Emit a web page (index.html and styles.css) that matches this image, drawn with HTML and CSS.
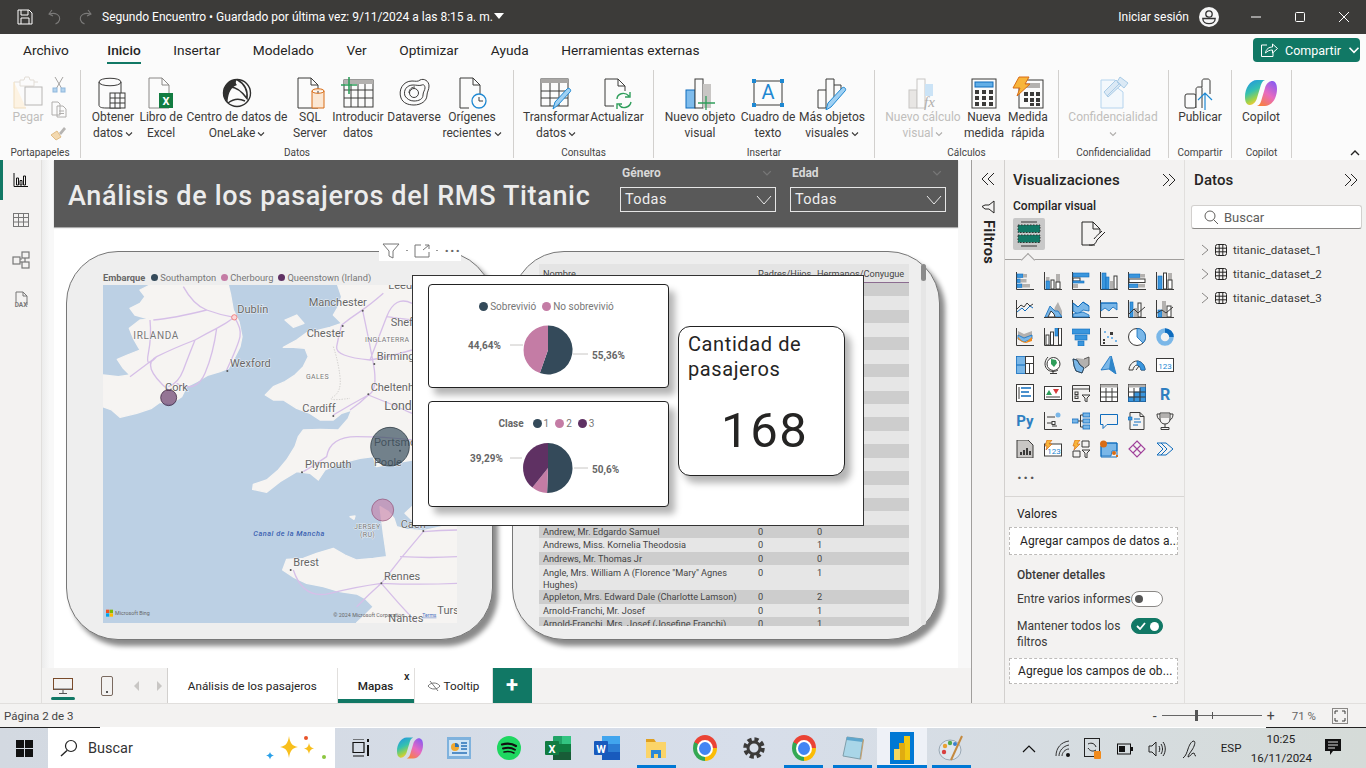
FILE: index.html
```html
<!DOCTYPE html>
<html lang="es">
<head>
<meta charset="utf-8">
<title>Segundo Encuentro</title>
<link rel="stylesheet" href="styles.css">
</head>
<body>
<svg class="defs" width="0" height="0">
  <defs>
    <linearGradient id="cpA" x1="0" y1="0" x2="0.4" y2="1"><stop offset="0" stop-color="#1f8fe8"/><stop offset=".5" stop-color="#35c1b0"/><stop offset=".8" stop-color="#9fd24a"/><stop offset="1" stop-color="#f6c935"/></linearGradient>
    <linearGradient id="cpB" x1="0.8" y1="0" x2="0.2" y2="1"><stop offset="0" stop-color="#8a5cf0"/><stop offset=".5" stop-color="#e86ac0"/><stop offset="1" stop-color="#f8813b"/></linearGradient>
    <symbol id="copilot" viewBox="0 0 32 32">
      <path fill="url(#cpA)" d="M12 3h8c-3 1-4 4-5 8l-3 10c-1 4-4 7-7 7H4c-3-1-4-4-4-8C0 11 5 3 12 3z"/>
      <path fill="url(#cpB)" d="M20 29h-8c3-1 4-4 5-8l3-10c1-4 4-7 7-7h1c3 1 4 4 4 8 0 9-5 17-12 17z"/>
    </symbol>
    <symbol id="tbl" viewBox="0 0 14 14"><rect x="1.5" y="1.5" width="11" height="11" rx="2" fill="none" stroke="#252423"/><path d="M5.2 1.5v11M8.8 1.5v11M1.5 5.2h11M1.5 8.8h11" stroke="#252423" fill="none"/></symbol>
    <symbol id="dbl" viewBox="0 0 14 14"><path d="M7 1L1 7l6 6M13 1L7 7l6 6" fill="none" stroke="#252423"/></symbol>
    <symbol id="dbr" viewBox="0 0 14 14"><path d="M1 1l6 6-6 6M7 1l6 6-6 6" fill="none" stroke="#252423"/></symbol>
    <symbol id="chev" viewBox="0 0 8 8"><path d="M1 2.5L4 5.5 7 2.5" fill="none" stroke="currentColor" stroke-width="1.1"/></symbol>
  </defs>
</svg>

<header class="titlebar">
  <svg class="tb-ic save" width="16" height="16" viewBox="0 0 16 16"><path d="M1 1h11l3 3v11H1z M4 1v5h7V1 M4 15v-6h8v6" fill="none" stroke="#fff"/></svg>
  <svg class="tb-ic undo" width="16" height="16" viewBox="0 0 16 16"><path d="M5 1L2 5l4 2M2.500 5c6-2 11 1 10 6-.5 2-2 3-4 4" fill="none" stroke="#7b7a79" stroke-width="1.100"/></svg>
  <svg class="tb-ic redo" width="16" height="16" viewBox="0 0 16 16"><path d="M11 1l3 4-4 2M13.500 5c-6-2-11 1-10 6 .5 2 2 3 4 4" fill="none" stroke="#7b7a79" stroke-width="1.100"/></svg>
  <span class="doc-title">Segundo Encuentro • Guardado por última vez: 9/11/2024 a las 8:15 a. m.</span>
  <span class="caret"></span>
  <span class="signin">Iniciar sesión</span>
  <svg class="avatar" width="20" height="20" viewBox="0 0 20 20"><circle cx="10" cy="10" r="10" fill="#f5f5f5"/><circle cx="10" cy="7" r="3.200" fill="none" stroke="#333" stroke-width="1.300"/><path d="M3.800 11.500h12.400c0 3.500-3 5.200-6.200 5.200s-6.200-1.700-6.200-5.200z" fill="none" stroke="#333" stroke-width="1.300"/></svg>
  <div class="winbtns">
    <svg width="12" height="12" viewBox="0 0 12 12"><path d="M1 6h10" stroke="#fff"/></svg>
    <svg width="12" height="12" viewBox="0 0 12 12"><rect x="1.500" y="1.500" width="9" height="9" rx="1" fill="none" stroke="#fff"/></svg>
    <svg width="12" height="12" viewBox="0 0 12 12"><path d="M1 1l10 10M11 1L1 11" stroke="#fff"/></svg>
  </div>
</header>

<nav class="tabsrow">
  <span class="rtab first">Archivo</span>
  <span class="rtab active">Inicio</span>
  <span class="rtab">Insertar</span>
  <span class="rtab">Modelado</span>
  <span class="rtab">Ver</span>
  <span class="rtab">Optimizar</span>
  <span class="rtab">Ayuda</span>
  <span class="rtab">Herramientas externas</span>
  <button class="share">
    <svg width="18" height="16" viewBox="0 0 18 16"><path d="M7 3H1.500v11.500H13V10M5.500 11c.5-4 3.500-6 7-6V2l5 4.500-5 4.500V8c-3 0-5 1-7 3z" fill="none" stroke="#fff"/></svg>
    <span>Compartir</span>
    <svg class="share-cv" width="12" height="12" viewBox="0 0 8 8"><use href="#chev"/></svg>
  </button>
</nav>

<section class="ribbon">
  <div class="group g-clip">
    <div class="group-body">
      <div class="item w-pegar off">
        <svg class="ic" width="34" height="34" viewBox="0 0 34 34"><path d="M9 4h4l1-3h4l1 3h4v6H9zM3 6h6M23 6h4" fill="none" stroke="#e2ddd6"/><path d="M3 6v26h12" fill="#fdf3e3" stroke="#f0ddbd"/><rect x="14" y="11" width="17" height="18" fill="#fafafa" stroke="#b8b6b4"/></svg>
        <span class="lbl">Pegar</span>
      </div>
      <div class="mini">
        <svg width="14" height="18" viewBox="0 0 14 18"><path d="M3 1l7 12M11 1L4 13" stroke="#a5a3a1" fill="none"/><rect x="1" y="12" width="4" height="4" fill="#b5d4ee" stroke="#8fb8dd"/><rect x="9" y="12" width="4" height="4" fill="#b5d4ee" stroke="#8fb8dd"/></svg>
        <svg width="16" height="17" viewBox="0 0 16 17"><path d="M1 1h6l2 2v11H1z M6 5h6l3 3v8H6z M8 10h5M8 12.500h5" fill="#fbfbfb" stroke="#b0aeac"/></svg>
        <svg width="17" height="16" viewBox="0 0 17 16"><path d="M9 8l5-6 2 2-5 6z" fill="#b6b4b2"/><path d="M1 10l6-4 4 6-5 3z" fill="#f3d9b0" stroke="#e0bc86"/></svg>
      </div>
    </div>
    <span class="glabel">Portapapeles</span>
  </div>

  <div class="group g-datos">
    <div class="group-body">
      <div class="item w48">
        <svg class="ic" width="34" height="34" viewBox="0 0 34 34"><path d="M3 6c0-5 22-5 22 0v26H10C5 32 3 31 3 29z M3 6c0 5 22 5 22 0" fill="#fbfbfb" stroke="#3b3a39"/><rect x="14" y="17" width="15" height="15" fill="#fbfbfb" stroke="#3b3a39"/><path d="M19 17v15M24 17v15M14 22h15M14 27h15" stroke="#3b3a39"/></svg>
        <span class="lbl">Obtener<br>datos<svg class="cv" width="8" height="8"><use href="#chev"/></svg></span>
      </div>
      <div class="item w48">
        <svg class="ic" width="34" height="34" viewBox="0 0 34 34"><path d="M5 2h13l7 7v23H5z M18 2v7h7" fill="#fbfbfb" stroke="#8a8886"/><rect x="15" y="17" width="14" height="15" fill="#127c41"/><text class="xl" x="22" y="29">X</text></svg>
        <span class="lbl">Libro de<br>Excel</span>
      </div>
      <div class="item w104">
        <svg class="ic" width="34" height="34" viewBox="0 0 34 34"><circle cx="17" cy="17" r="13.500" fill="#fbfbfb" stroke="#30302f" stroke-width="1.400"/><path d="M17 3.500A13.500 13.500 0 0 0 7.500 26.500C8 20 9 12 17 9c-2-2-1-4 0-5.500z" fill="#30302f"/><path d="M17 3.500c7 4 11 10 10 19-6-8-13-13-20-11" fill="none" stroke="#30302f" stroke-width="1.600"/><path d="M8 27c5-4 11-5 17-2" fill="none" stroke="#30302f" stroke-width="1.400"/></svg>
        <span class="lbl">Centro de datos de<br>OneLake<svg class="cv" width="8" height="8"><use href="#chev"/></svg></span>
      </div>
      <div class="item w42">
        <svg class="ic" width="34" height="34" viewBox="0 0 34 34"><path d="M5 2h13l7 7v23H5z M18 2v7h7" fill="#fbfbfb" stroke="#3b3a39"/><path d="M19 15c0-3 12-3 12 0v17H19z M19 15c0 3 12 3 12 0" fill="#fbe7d3" stroke="#d86c16"/></svg>
        <span class="lbl">SQL<br>Server</span>
      </div>
      <div class="item w54">
        <svg class="ic" width="34" height="34" viewBox="0 0 34 34"><rect x="3" y="4" width="29" height="27" fill="#fbfbfb" stroke="#3b3a39"/><rect x="3" y="4" width="29" height="4" fill="#b3b1af"/><path d="M10 8v23M17 8v23M24 8v23M3 14h29M3 22h29" stroke="#3b3a39"/><path d="M8 1v17M0 9h16" stroke="#2f9e5b" stroke-width="1.600"/></svg>
        <span class="lbl">Introducir<br>datos</span>
      </div>
      <div class="item w58">
        <svg class="ic" width="34" height="34" viewBox="0 0 34 34"><g fill="none" stroke="#3b3a39"><path d="M4 22C1 14 6 5 15 5c3 0 6 1 8-1 4-2 9 1 9 6 0 4-2 6-2 9 0 6-6 10-13 10C11 29 6 27 4 22z"/><path d="M8 20c-2-6 2-11 8-11 4 0 6 1 9 0 2-1 3 1 3 3s-2 4-2 7c0 4-4 6-9 6-4 0-7-2-9-5z"/><circle cx="17" cy="17" r="4.500"/><path d="M12 17c0-4 3-6 6-6"/></g></svg>
        <span class="lbl">Dataverse</span>
      </div>
      <div class="item w58">
        <svg class="ic" width="34" height="34" viewBox="0 0 34 34"><path d="M5 2h13l7 7v13 M18 2v7h7 M14 32H5V2" fill="#fbfbfb" stroke="#3b3a39"/><circle cx="24" cy="25" r="7" fill="#fbfbfb" stroke="#1e88d2" stroke-width="1.300"/><path d="M24 21v4h4" fill="none" stroke="#3b3a39"/></svg>
        <span class="lbl">Orígenes<br>recientes<svg class="cv" width="8" height="8"><use href="#chev"/></svg></span>
      </div>
    </div>
    <span class="glabel">Datos</span>
  </div>

  <div class="group g-cons">
    <div class="group-body">
      <div class="item w64">
        <svg class="ic" width="34" height="34" viewBox="0 0 34 34"><rect x="2" y="3" width="27" height="27" fill="#fbfbfb" stroke="#3b3a39"/><rect x="2" y="3" width="27" height="4" fill="#a8a6a4"/><path d="M11 7v23M20 7v23M2 15h27M2 22h27" stroke="#3b3a39"/><path d="M14 33l2-7L28 13c2-2 5 1 3 3L19 29z" fill="#9fd0f3" stroke="#1e88d2"/></svg>
        <span class="lbl">Transformar<br>datos<svg class="cv" width="8" height="8"><use href="#chev"/></svg></span>
      </div>
      <div class="item w58">
        <svg class="ic" width="34" height="34" viewBox="0 0 34 34"><path d="M14 30H5V3h13l7 7v5 M18 3v7h7" fill="#fbfbfb" stroke="#3b3a39"/><g fill="none" stroke="#2f9e5b" stroke-width="1.400"><path d="M17 23c0-5 7-8 12-3M30 16v5h-5"/><path d="M31 26c-1 5-8 8-12 3M17 33v-5h5"/></g></svg>
        <span class="lbl">Actualizar</span>
      </div>
    </div>
    <span class="glabel">Consultas</span>
  </div>

  <div class="group g-ins">
    <div class="group-body">
      <div class="item w72">
        <svg class="ic" width="34" height="34" viewBox="0 0 34 34"><rect x="3" y="14" width="9" height="18" fill="#7fbcec" stroke="#0f6cbd"/><rect x="12" y="3" width="8" height="29" fill="#fbfbfb" stroke="#3b3a39"/><rect x="20" y="8" width="8" height="24" fill="#c8c6c4"/><path d="M23 20v14M15 27h17" stroke="#2f9e5b" stroke-width="1.300"/></svg>
        <span class="lbl">Nuevo objeto<br>visual</span>
      </div>
      <div class="item w64">
        <svg class="ic" width="34" height="34" viewBox="0 0 34 34"><rect x="3" y="3" width="28" height="24" transform="translate(0 2)" fill="#fbfbfb" stroke="#3b3a39"/><g fill="#1e88d2"><rect x="1" y="3" width="4" height="4"/><rect x="29" y="3" width="4" height="4"/><rect x="1" y="27" width="4" height="4"/><rect x="29" y="27" width="4" height="4"/></g><text class="atxt" x="17" y="23">A</text></svg>
        <span class="lbl">Cuadro de<br>texto</span>
      </div>
      <div class="item w64">
        <svg class="ic" width="34" height="34" viewBox="0 0 34 34"><path d="M3 32V14h8V3h8v6h7v5 M3 32h9 M11 14v18" fill="#fbfbfb" stroke="#3b3a39"/><path d="M19 9v15" stroke="#3b3a39"/><path d="M11 34l2-7L27 12c2-2 5 1 3 3L16 31z" fill="#9fd0f3" stroke="#1e88d2"/></svg>
        <span class="lbl">Más objetos<br>visuales<svg class="cv" width="8" height="8"><use href="#chev"/></svg></span>
      </div>
    </div>
    <span class="glabel">Insertar</span>
  </div>

  <div class="group g-calc">
    <div class="group-body">
      <div class="item w76 off">
        <svg class="ic" width="34" height="34" viewBox="0 0 34 34"><rect x="3" y="14" width="8" height="18" fill="#e8e6e4" stroke="#c8c6c4"/><rect x="11" y="3" width="8" height="29" fill="#fbfbfb" stroke="#c8c6c4"/><rect x="19" y="8" width="8" height="12" fill="#cbe3f6"/><text class="fx" x="18" y="31">fx</text></svg>
        <span class="lbl">Nuevo cálculo<br>visual<svg class="cv" width="8" height="8"><use href="#chev"/></svg></span>
      </div>
      <div class="item w46">
        <svg class="ic" width="34" height="34" viewBox="0 0 34 34"><rect x="5" y="3" width="24" height="29" fill="#fbfbfb" stroke="#3b3a39"/><rect x="8" y="6" width="18" height="5" fill="#63aee6" stroke="#0f6cbd"/><g fill="#3b3a39"><rect x="8" y="14" width="4" height="4"/><rect x="15" y="14" width="4" height="4"/><rect x="22" y="14" width="4" height="4"/><rect x="8" y="20" width="4" height="4"/><rect x="15" y="20" width="4" height="4"/><rect x="22" y="20" width="4" height="4"/><rect x="8" y="26" width="4" height="4"/><rect x="15" y="26" width="4" height="4"/><rect x="22" y="26" width="4" height="4"/></g></svg>
        <span class="lbl">Nueva<br>medida</span>
      </div>
      <div class="item w42">
        <svg class="ic" width="34" height="34" viewBox="0 0 34 34"><rect x="8" y="4" width="24" height="28" fill="#fbfbfb" stroke="#3b3a39"/><rect x="14" y="7" width="15" height="5" fill="#b3b1af"/><g fill="#3b3a39"><rect x="13" y="16" width="4" height="4"/><rect x="19" y="16" width="4" height="4"/><rect x="25" y="16" width="4" height="4"/><rect x="13" y="22" width="4" height="4"/><rect x="19" y="22" width="4" height="4"/><rect x="25" y="22" width="4" height="4"/><rect x="19" y="27" width="4" height="3"/><rect x="25" y="27" width="4" height="3"/></g><path d="M8 1h10l-4 7h5L6 20l3-8H2z" fill="#f8b53a" stroke="#d86c16"/></svg>
        <span class="lbl">Medida<br>rápida</span>
      </div>
    </div>
    <span class="glabel">Cálculos</span>
  </div>

  <div class="group g-conf">
    <div class="group-body">
      <div class="item w96 off">
        <svg class="ic" width="34" height="34" viewBox="0 0 34 34"><path d="M5 4h14v6l8 6v16H5z" fill="#f3f8fc" stroke="#b5d4ee"/><path d="M8 16L20 4l5 5-13 12zM11 20L24 7M24 1l8 6-4 5-7-6z" fill="#dbe9f5" stroke="#a9cbe6"/></svg>
        <span class="lbl">Confidencialidad<br><svg class="cv solo" width="8" height="8"><use href="#chev"/></svg></span>
      </div>
    </div>
    <span class="glabel">Confidencialidad</span>
  </div>

  <div class="group g-pub">
    <div class="group-body">
      <div class="item w52">
        <svg class="ic" width="34" height="34" viewBox="0 0 34 34"><g fill="#fbfbfb" stroke="#3b3a39"><rect x="2" y="18" width="11" height="14" rx="2"/><path d="M13 32V13c0-1 1-2 2-2h4v21"/><path d="M19 11V5c0-1 1-2 2-2h4c1 0 2 1 2 2v13"/></g><path d="M22 34V17M15 24l7-7 7 7" fill="none" stroke="#1e88d2" stroke-width="1.200"/></svg>
        <span class="lbl">Publicar</span>
      </div>
    </div>
    <span class="glabel">Compartir</span>
  </div>

  <div class="group g-cop">
    <div class="group-body">
      <div class="item w50">
        <svg class="ic" width="32" height="34" viewBox="0 0 32 32"><use href="#copilot"/></svg>
        <span class="lbl">Copilot</span>
      </div>
    </div>
    <span class="glabel">Copilot</span>
  </div>
  <svg class="collapse" width="10" height="7" viewBox="0 0 10 7"><path d="M1 6l4-4 4 4" fill="none" stroke="#252423" stroke-width="1.400"/></svg>
</section>

<main class="main">
  <aside class="rail">
    <span class="rail-btn on"><svg width="16" height="16" viewBox="0 0 16 16"><path d="M1 1v13.500h14" fill="none" stroke="#111"/><path d="M3.500 6h2v7h-2zM7 8.500h2V13H7zM10.500 4h2v9h-2z" fill="none" stroke="#111"/></svg></span>
    <span class="rail-btn"><svg width="16" height="16" viewBox="0 0 16 16"><rect x=".5" y="1.500" width="15" height="13" fill="none" stroke="#777"/><path d="M.5 5.500h15M.5 10h15M5.500 1.500v13M10.500 1.500v13" stroke="#777"/></svg></span>
    <span class="rail-btn"><svg width="18" height="18" viewBox="0 0 18 18"><g fill="none" stroke="#777" stroke-width="1.200"><rect x="1" y="6" width="7" height="7"/><rect x="10" y="1" width="7" height="6"/><rect x="10" y="11" width="7" height="6"/><path d="M8 8h2M8 11h2M13 7v4"/></g></svg></span>
    <span class="rail-btn"><svg width="18" height="18" viewBox="0 0 18 18"><path d="M4 11V1h7l4 4v9 M11 1v4h4" fill="none" stroke="#777"/><text class="dax" x="9" y="16">DAX</text></svg></span>
  </aside>

  <div class="center">
    <div class="canvas">
      <div class="page">
        <div class="rep-head">
          <h1 class="rep-title">Análisis de los pasajeros del RMS Titanic</h1>
          <div class="slicers">
            <div class="slicer">
              <div class="sl-label"><span>Género</span><svg class="sl-faint" width="10" height="10" viewBox="0 0 8 8"><use href="#chev"/></svg></div>
              <div class="sl-box"><span>Todas</span><svg width="16" height="16" viewBox="0 0 16 16"><path d="M1 4l7 8 7-8" fill="none" stroke="#e8e8e8"/></svg></div>
            </div>
            <div class="slicer">
              <div class="sl-label"><span>Edad</span><svg class="sl-faint" width="10" height="10" viewBox="0 0 8 8"><use href="#chev"/></svg></div>
              <div class="sl-box"><span>Todas</span><svg width="16" height="16" viewBox="0 0 16 16"><path d="M1 4l7 8 7-8" fill="none" stroke="#e8e8e8"/></svg></div>
            </div>
          </div>
        </div>

        <div class="visuals">
          <article class="card map-card">
            <div class="legend map-legend">
              <b>Embarque</b>
              <span class="dot navy"></span><span>Southampton</span>
              <span class="dot pink"></span><span>Cherbourg</span>
              <span class="dot plum"></span><span>Queenstown (Irland)</span>
            </div>
            <svg class="map" width="354" height="338" viewBox="189 135 1062 1014">
              <rect x="189" y="135" width="1062" height="1014" fill="#bcd0e4"/>
              <g class="land">
                <path d="M330 135L565 135 572 165 580 210 597 245 606 290 600 320 585 350 565 385 540 395 505 405 470 425 440 440 425 470 395 490 360 487 335 505 290 520 240 532 215 510 189 500 189 405 235 410 270 405 250 385 232 358 262 345 300 330 280 295 268 265 300 240 330 238 285 225 270 205 300 190 315 170 300 150z"/>
                <path d="M893 135L905 170 895 200 880 225 905 250 870 262 830 272 800 278 770 300 730 322 760 322 795 325 805 350 790 380 765 405 735 425 700 440 676 465 700 480 730 480 770 505 810 520 840 540 880 540 905 520 935 510 925 535 895 570 840 568 790 570 775 590 765 620 740 660 715 690 680 720 640 733 638 748 680 757 720 725 770 695 810 700 835 720 855 690 900 670 960 655 1000 650 1010 680 1060 670 1116 660 1116 135z"/>
                <path d="M735 240L770 225 792 250 760 262z"/>
                <path d="M1116 800L1095 820 1116 840z"/>
                <path d="M930 830L945 828 942 838z"/>
                <path d="M1020 800L1045 815 1062 835 1070 860 1100 868 1150 872 1251 850 1251 1148 950 1148 975 1125 1000 1100 975 1075 950 1062 900 1055 850 1040 800 1030 762 1012 728 990 740 958 790 955 830 940 880 925 915 945 950 960 1000 955 1040 950 1035 915 1030 880z"/>
              </g>
              <g class="roads">
                <path d="M583 232Q540 225 500 210T430 140M583 232Q560 250 530 265T465 300Q445 350 430 390T385 440M583 232Q605 265 600 290T560 390M530 265Q520 340 495 400T410 430M465 300Q400 325 350 350T385 450M340 240Q400 235 500 210M350 350Q310 380 270 410M330 240Q335 290 325 340T350 350"/>
                <path d="M905 255Q930 235 960 215T1030 160M905 255Q895 290 890 320T990 360Q1050 350 1116 330M968 212Q985 290 1000 370T985 465Q960 490 930 510M985 465Q1050 490 1116 520M880 525Q930 495 985 465M1116 600Q1030 590 950 590T860 650Q825 675 790 695M990 360Q1015 295 1040 230T1116 190M1040 230Q1080 235 1116 240"/>
                <path d="M1024 1030Q1085 950 1150 875M1024 1030Q1140 1035 1251 1030M1024 1030Q950 1040 870 1060T760 990M1024 1030Q985 1065 950 1100M1150 875Q1200 870 1251 870M1024 1030Q1075 1090 1130 1148M1080 950Q1170 955 1251 950"/>
              </g>
              <path d="M880 320Q895 365 900 410T880 470 930 475" fill="none" stroke="#a9a6a4" stroke-width="1.500" stroke-dasharray="4 4"/>
              <g class="map-pts">
                <circle cx="562" cy="393" r="3"/><circle cx="880" cy="528" r="3"/><circle cx="985" cy="463" r="3"/><circle cx="1003" cy="372" r="3"/><circle cx="968" cy="212" r="3"/><circle cx="908" cy="258" r="3"/><circle cx="786" cy="697" r="3"/><circle cx="1080" cy="632" r="3"/><circle cx="1150" cy="873" r="3"/><circle cx="1024" cy="1030" r="3"/><circle cx="752" cy="990" r="3"/>
              </g>
              <circle cx="583" cy="232" r="8" fill="#fbd8d8" stroke="#ea5a5a" stroke-width="2"/>
              <g class="mt">
                <text x="592" y="218">Dublín</text>
                <text x="806" y="197">Manchester</text>
                <text x="1045" y="147">Leeds</text>
                <text x="800" y="290">Chester</text>
                <text x="1052" y="259">Sheffield</text>
                <text x="1010" y="360">Birmingham</text>
                <text x="570" y="381">Wexford</text>
                <text x="992" y="452">Cheltenham</text>
                <text x="375" y="452">Cork</text>
                <text x="787" y="516">Cardiff</text>
                <text x="795" y="685">Plymouth</text>
                <text x="1082" y="863">Caen</text>
                <text x="760" y="978">Brest</text>
                <text x="1032" y="1020">Rennes</text>
                <text x="1192" y="1121">Turs</text>
                <text x="1045" y="1146">Nantes</text>
                <text class="mt-big" x="1033" y="509">Londres</text>
                <text x="1002" y="619">Portsmouth</text>
                <text x="1002" y="678">Poole</text>
                <text class="mt-cty" x="280" y="296">IRLANDA</text>
                <text class="mt-sm" x="975" y="305">INGLATERRA</text>
                <text class="mt-sm" x="798" y="416">GALES</text>
                <text class="mt-sm" x="942" y="868">JERSEY</text>
                <text class="mt-sm" x="960" y="890">(RU)</text>
                <text class="mt-sea" x="640" y="887">Canal de la Mancha</text>
                <text class="mt-cr" x="225" y="1126">Microsoft Bing</text>
                <text class="mt-cr" x="880" y="1130">© 2024 Microsoft Corporation</text>
                <text class="mt-term" x="1147" y="1130">Terms</text>
              </g>
              <g>
                <rect x="198" y="1109" width="10" height="10" fill="#f25022"/><rect x="209" y="1109" width="10" height="10" fill="#7fba00"/><rect x="198" y="1120" width="10" height="10" fill="#00a4ef"/><rect x="209" y="1120" width="10" height="10" fill="#ffb900"/>
              </g>
              <circle cx="386" cy="473" r="24" fill="#5f3163" fill-opacity=".65" stroke="#2e1732" stroke-width="2"/>
              <circle cx="1050" cy="620" r="58" fill="#344a5a" fill-opacity=".68" stroke="#1c2a34" stroke-width="2"/>
              <circle cx="1028" cy="810" r="33" fill="#c47ca5" fill-opacity=".6" stroke="#8f4f74" stroke-width="2"/>
            </svg>
            <div class="vis-head">
              <svg width="18" height="16" viewBox="0 0 18 16"><path d="M1 1h16l-6 7v7l-4-2V8z" fill="none" stroke="#777"/></svg>
              <i></i>
              <svg width="16" height="14" viewBox="0 0 16 14"><path d="M7 1H1v12h14V8M9 6l6-5M11 1h4v4" fill="none" stroke="#777"/></svg>
              <i></i>
              <span class="more">···</span>
            </div>
          </article>

          <article class="card table-card">
            <div class="tbl">
              <div class="thead"><span>Nombre</span><span>Padres/Hijos</span><span>Hermanos/Conyugue</span></div>
              <div class="row d"></div><div class="row"></div><div class="row d"></div><div class="row"></div><div class="row d"></div><div class="row"></div><div class="row d"></div><div class="row"></div><div class="row d"></div><div class="row"></div><div class="row d"></div><div class="row"></div><div class="row d"></div><div class="row"></div><div class="row d"></div><div class="row"></div><div class="row d"></div><div class="row"></div>
              <div class="row d"><span>Andrew, Mr. Edgardo Samuel</span><span>0</span><span>0</span></div>
              <div class="row"><span>Andrews, Miss. Kornelia Theodosia</span><span>0</span><span>1</span></div>
              <div class="row d"><span>Andrews, Mr. Thomas Jr</span><span>0</span><span>0</span></div>
              <div class="row tall"><span>Angle, Mrs. William A (Florence "Mary" Agnes Hughes)</span><span>0</span><span>1</span></div>
              <div class="row d"><span>Appleton, Mrs. Edward Dale (Charlotte Lamson)</span><span>0</span><span>2</span></div>
              <div class="row"><span>Arnold-Franchi, Mr. Josef</span><span>0</span><span>1</span></div>
              <div class="row d"><span>Arnold-Franchi, Mrs. Josef (Josefine Franchi)</span><span>0</span><span>1</span></div>
            </div>
            <div class="scroll"></div>
          </article>

          <div class="tooltip">
            <div class="tip-col">
              <div class="tip-card">
                <div class="legend pie-legend"><span class="dot navy big"></span><span>Sobrevivió</span><span class="dot pink big"></span><span>No sobrevivió</span></div>
                <svg class="pie" width="238" height="68" viewBox="0 0 238 68">
                  <path d="M119 33V8.500A24.500 24.500 0 1 1 110.900 56.100z" fill="#344a5a"/>
                  <path d="M119 33L110.900 56.100A24.500 24.500 0 0 1 119 8.500z" fill="#c47ca5"/>
                  <path d="M144 37h15M81 28h13" stroke="#c8c6c4"/>
                  <text class="pct" x="39" y="32">44,64%</text>
                  <text class="pct" x="163" y="42">55,36%</text>
                </svg>
              </div>
              <div class="tip-card second">
                <div class="legend pie-legend"><b class="cl">Clase</b><span class="dot navy big"></span><span>1</span><span class="dot pink big"></span><span>2</span><span class="dot plum big"></span><span>3</span></div>
                <svg class="pie" width="238" height="70" viewBox="0 0 238 70">
                  <path d="M119 34V9A25 25 0 1 1 118.100 59z" fill="#344a5a"/>
                  <path d="M119 34L118.100 59A25 25 0 0 1 103.400 53.500z" fill="#c47ca5"/>
                  <path d="M119 34L103.400 53.500A25 25 0 0 1 119 9z" fill="#5f3163"/>
                  <path d="M145 34h14M81 24h12" stroke="#c8c6c4"/>
                  <text class="pct" x="41" y="28">39,29%</text>
                  <text class="pct" x="163" y="39">50,6%</text>
                </svg>
              </div>
            </div>
            <div class="kpi">
              <div class="kpi-title">Cantidad de pasajeros</div>
              <div class="kpi-val">168</div>
            </div>
          </div>
        </div>
      </div>
    </div>

    <div class="pagetabs">
      <div class="devices">
        <span class="dev on"><svg width="20" height="18" viewBox="0 0 20 18"><rect x=".5" y="1.500" width="19" height="11" fill="none" stroke="#7a4b2a"/><path d="M10 13v3M6 16.500h8" stroke="#555"/><path d="M1 12h18" stroke="#666"/></svg></span>
        <span class="dev"><svg width="12" height="20" viewBox="0 0 12 20"><rect x=".5" y=".5" width="11" height="19" rx="1.500" fill="none" stroke="#7a6a60"/><rect x="5" y="15" width="2" height="2" fill="#555"/></svg></span>
        <svg class="pg-arrow" width="6" height="10" viewBox="0 0 6 10"><path d="M5 0v10L0 5z" fill="#c8c6c4"/></svg>
        <svg class="pg-arrow" width="6" height="10" viewBox="0 0 6 10"><path d="M1 0v10l5-5z" fill="#c8c6c4"/></svg>
      </div>
      <span class="ptab w1">Análisis de los pasajeros</span>
      <span class="ptab w2 on">Mapas<em>x</em></span>
      <span class="ptab w3"><svg width="14" height="12" viewBox="0 0 14 12"><path d="M1 6c3-4 9-4 12 0-3 4-9 4-12 0zM3 1l8 10" fill="none" stroke="#777"/></svg>Tooltip</span>
      <span class="ptab-add">+</span>
    </div>
  </div>

  <aside class="filters">
    <svg class="fi-dbl" width="14" height="14"><use href="#dbl"/></svg>
    <svg class="fi-ic" width="14" height="14" viewBox="0 0 14 14"><path d="M13 1v12L8 9H4L1 6.500 4 5l4 0z" fill="none" stroke="#252423"/></svg>
    <span class="fi-txt">Filtros</span>
  </aside>

  <aside class="viz">
    <div class="p-head"><span>Visualizaciones</span><svg width="14" height="14"><use href="#dbr"/></svg></div>
    <div class="viz-sub">Compilar visual</div>
    <div class="viz-mode">
      <span class="vm on"><svg width="24" height="26" viewBox="0 0 24 26"><path d="M4 1h16M4 25h16" stroke="#333"/><rect x="1" y="4" width="22" height="7.500" fill="#117865" stroke="#333" stroke-dasharray="1.500 1.500"/><rect x="1" y="14" width="22" height="7.500" fill="#117865" stroke="#333" stroke-dasharray="1.500 1.500"/></svg></span>
      <svg class="vm2" width="26" height="26" viewBox="0 0 26 26"><path d="M14 24H1V1h11l7 7v4 M12 1v7h7" fill="none" stroke="#252423"/><path d="M8 24c5 1 7-2 8-5l8-8" fill="none" stroke="#252423"/><path d="M13 18c2-3 5-5 8-8" fill="none" stroke="#252423"/></svg>
    </div>
    <div class="viz-rule"></div>
    <div class="viz-grid">
      <!-- row 1 -->
      <svg viewBox="0 0 18 18"><path class="k" d="M.5 0v17.500H18"/><rect class="bl" x="1" y="2" width="6" height="3.500"/><rect class="gr" x="7" y="2" width="4" height="3.500"/><rect class="bl" x="1" y="7" width="3.500" height="3.500"/><rect class="gr" x="4.500" y="7" width="6" height="3.500"/><rect class="bl" x="1" y="12" width="5" height="3.500"/><rect class="gr" x="6" y="12" width="8" height="3.500"/></svg>
      <svg viewBox="0 0 18 18"><path class="k" d="M.5 0v17.500H18"/><rect class="gr" x="2" y="5" width="3.500" height="4"/><rect class="bl" x="2" y="9" width="3.500" height="8"/><rect class="wk" x="7" y="8" width="3" height="9"/><rect class="gr" x="12" y="2" width="4" height="8"/><rect class="wk" x="12" y="10" width="4" height="7"/></svg>
      <svg viewBox="0 0 18 18"><path class="k" d="M.5 0v17.500H18"/><rect class="bl" x="1" y="1" width="16" height="4"/><rect class="wk" x="1" y="6" width="7" height="3"/><rect class="bl" x="1" y="9" width="11" height="2"/><rect class="gr" x="1" y="12" width="5" height="4"/></svg>
      <svg viewBox="0 0 18 18"><path class="k" d="M.5 0v17.500H18"/><rect class="bl" x="2" y="1" width="4" height="16"/><rect class="bl" x="6" y="5" width="3" height="12"/><rect class="gr" x="10" y="9" width="3" height="8"/><rect class="wk" x="14" y="4" width="3" height="13"/></svg>
      <svg viewBox="0 0 18 18"><path class="k" d="M.5 0v17.500H18"/><rect class="bl" x="1" y="2" width="11" height="3.500"/><rect class="gr" x="12" y="2" width="5" height="3.500"/><rect class="wk" x="1" y="7" width="16" height="3.500"/><rect class="bl" x="1" y="12" width="9" height="3.500"/><rect class="gr" x="10" y="12" width="7" height="3.500"/></svg>
      <svg viewBox="0 0 18 18"><path class="k" d="M.5 0v17.500H18"/><rect class="bl" x="2" y="4" width="4" height="13"/><rect class="wk" x="7.500" y="1" width="3" height="16"/><rect class="gr" x="12" y="1" width="4" height="7"/><rect class="wk" x="12" y="8" width="4" height="9"/></svg>
      <!-- row 2 -->
      <svg viewBox="0 0 18 18"><path class="k" d="M.5 0v17.500H18"/><path class="bs" d="M1 12l5-4 3 3 5-5 3 2"/><path class="k" d="M1 9l4-4 3 2 3-4 3 3 3-2"/></svg>
      <svg viewBox="0 0 18 18"><path class="gr" d="M8 17l3-10 3-5 4 9v6z"/><path class="lb" d="M1 17L6 6l5 5 3 0 4 6z"/><path class="wk" d="M4 17l3-6 3 3 1 3z"/><path class="k" d="M0 17.500h18"/></svg>
      <svg viewBox="0 0 18 18"><path class="k" d="M.5 0v17.500H18"/><path class="lb" d="M1 3l5 4 5-5 6 4v5l-6-1-5 4-5-3z"/><path class="bs" d="M1 3l5 4 5-5 6 4"/><path class="lb" d="M1 14l5-1 5-1 6 3v2H1z"/></svg>
      <svg viewBox="0 0 18 18"><path class="k" d="M.5 0v17.500H18"/><path class="lb" d="M1 3h16v7l-4-3-4 4-4-3-4 3z"/><path class="bs" d="M1 3h16"/></svg>
      <svg viewBox="0 0 18 18"><path class="k" d="M.5 0v17.500H18"/><rect class="bl" x="2" y="2" width="3" height="15"/><rect class="gr" x="6" y="8" width="3" height="9"/><rect class="wk" x="10" y="3" width="3" height="14"/><path class="k" d="M1 14l5-5 4 4 7-6"/></svg>
      <svg viewBox="0 0 18 18"><path class="k" d="M.5 0v17.500H18"/><rect class="bl" x="2" y="10" width="4" height="7"/><rect class="gr" x="6" y="1" width="4" height="16"/><rect class="wk" x="11" y="6" width="4" height="11"/><path class="k" d="M1 13l5-3 4 3 7-6"/></svg>
      <!-- row 3 -->
      <svg viewBox="0 0 18 18"><path class="k" d="M.5 0v17.500H18"/><path class="gr" d="M2 3l6 3 8-3v4l-8 3-6-3z"/><path class="lb" d="M2 7l6 3 8-3v4l-8 3-6-3z"/><path class="or" d="M2 9l4 4 4 1 6-5v4l-6 2-4-1-4-3z"/></svg>
      <svg viewBox="0 0 18 18"><path class="k" d="M.5 0v17.500H18"/><rect class="wk" x="2" y="7" width="3" height="10"/><rect class="wk" x="6.500" y="4" width="3" height="13"/><rect class="bl" x="11" y="0" width="3" height="8"/><rect class="wk" x="14.500" y="0" width="3" height="17"/></svg>
      <svg viewBox="0 0 18 18"><rect class="bl" x="0" y="1" width="18" height="5"/><rect class="gr" x="0" y="5" width="18" height="0"/><rect class="bl" x="3" y="7" width="12" height="5" /><rect class="bl" x="6" y="13" width="6" height="5"/></svg>
      <svg viewBox="0 0 18 18"><path class="k" d="M.5 0v17.500H18"/><g class="dk"><rect x="3" y="11" width="2" height="2"/><rect x="3" y="14" width="2" height="2"/><rect x="10" y="4" width="3" height="3"/></g><g class="lbf"><rect x="4" y="3" width="2" height="2"/><rect x="7" y="8" width="2" height="2"/><rect x="11" y="9" width="2" height="2"/><rect x="15" y="12" width="2" height="2"/></g></svg>
      <svg viewBox="0 0 18 18"><circle class="wk" cx="9" cy="9" r="8.500"/><path class="lb" d="M9 .5a8.500 8.500 0 0 1 6 14.500L9 9z"/></svg>
      <svg viewBox="0 0 18 18"><circle class="ring" cx="9" cy="9" r="6.500"/><path class="ring2" d="M9 2.500a6.500 6.500 0 0 1 6.500 6.500"/></svg>
      <!-- row 4 -->
      <svg viewBox="0 0 18 18"><rect class="lb" x=".5" y=".5" width="9" height="17"/><rect class="wk" x="9.500" y=".5" width="8" height="7"/><rect class="wk" x="9.500" y="7.500" width="4" height="10"/><rect class="wk" x="13.500" y="7.500" width="4" height="10"/><path class="bs" d="M.5 9h9"/></svg>
      <svg viewBox="0 0 18 18"><circle class="wk" cx="9.500" cy="8" r="6.500"/><path class="gnf" d="M7 3l5 1 1 3-3 4-3-3z"/><path class="k" d="M4 1c-4 4-4 10 0 13 3 2 7 2 10 0M9 15v2M6 17.500h7"/></svg>
      <svg viewBox="0 0 18 18"><path class="gr" d="M4 2l8 1 5-2v8l-4 3-5-2-3-3z"/><path class="lb" d="M1 3l4 1 3 5 4 3-2 5-6-2-2-5z"/><path class="k2" d="M1 3l4 1 3 5 4 3-2 5-6-2-2-5zM12 3l5-2v8l-4 3"/></svg>
      <svg viewBox="0 0 18 18"><path class="lb" d="M11-1L1 14l8-1 7 5z"/><path class="bd" d="M11-1l-2 14 7 5z"/></svg>
      <svg viewBox="0 0 18 18"><path class="k" d="M1 14C1 9 5 5 9 5s8 4 8 9h-4c0-2-2-5-4-5s-4 3-4 5z"/><path class="bl" d="M9 5c4 0 8 4 8 9h-4c0-2-2-5-4-5z"/><path class="k" d="M8 14l3-4"/></svg>
      <svg viewBox="0 0 18 18"><rect class="wk" x=".5" y="2.500" width="17" height="13"/><text class="t123" x="9" y="12.500">123</text></svg>
      <!-- row 5 -->
      <svg viewBox="0 0 18 18"><rect class="wk" x=".5" y=".5" width="17" height="17"/><path class="bs2" d="M5 4h10M5 8h8M5 12h10"/><path class="k" d="M3 3v12"/></svg>
      <svg viewBox="0 0 18 18"><rect class="wk" x=".5" y="2.500" width="17" height="13"/><path class="gnf" d="M2 11l3-5 3 5z"/><path class="rdf" d="M9 5h6l-3 5z"/><path class="k" d="M2 13h14"/></svg>
      <svg viewBox="0 0 18 18"><path class="k" d="M.5 13V1.500h17V8M.5 17.500h8M.500 17V13M.5 5h17"/><rect class="k" x="3" y="8" width="3" height="2.500"/><rect class="k" x="3" y="12" width="3" height="2.500"/><path class="k" d="M10 11h8l-3 3v4l-2-1v-3z"/></svg>
      <svg viewBox="0 0 18 18"><rect class="wk" x=".5" y=".5" width="17" height="17"/><rect class="gr" x=".5" y=".5" width="17" height="3"/><path class="k" d="M6 4v13M12 4v13M.5 8h17M.5 13h17"/></svg>
      <svg viewBox="0 0 18 18"><rect class="wk" x=".5" y=".5" width="17" height="17"/><rect class="gr" x=".5" y=".5" width="17" height="3"/><rect class="bl" x="6" y="8" width="6" height="4.500"/><rect class="bl" x="12" y="3.500" width="5.500" height="14"/><rect class="bl" x=".5" y="13" width="11" height="4.500"/><path class="k" d="M6 4v13M12 4v13M.5 8h17M.5 13h17"/></svg>
      <svg viewBox="0 0 18 18"><text class="tR" x="9" y="15.500">R</text></svg>
      <!-- row 6 -->
      <svg viewBox="0 0 18 18"><text class="tPy" x="9" y="14">Py</text></svg>
      <svg viewBox="0 0 18 18"><path class="k" d="M.5 0v17.500H18"/><path class="k" d="M3 5h8M3 11h6M8 14h5"/><rect class="wk" x="8" y="9.500" width="3" height="3"/><circle class="lbf" cx="14" cy="3" r="2.500"/></svg>
      <svg viewBox="0 0 18 18"><rect class="lb" x="0" y="7" width="6" height="4"/><rect class="lb" x="11" y="1" width="7" height="4"/><rect class="lb" x="11" y="7" width="7" height="4"/><rect class="lb" x="11" y="13" width="7" height="4"/><path class="k" d="M6 9h5M8.500 3v12M8.500 3H11M8.500 15H11"/></svg>
      <svg viewBox="0 0 18 18"><path class="bs" d="M.5 2.500h17v10H7l-4 4v-4H.5z"/></svg>
      <svg viewBox="0 0 18 18"><path class="k" d="M2 17.500V.5h10l4 4v13z M12 .5v4h4"/><rect class="bl" x="0" y="5" width="4" height="3"/><path class="bs" d="M6 7h6M6 10h7M5 13h5"/></svg>
      <svg viewBox="0 0 18 18"><path class="k" d="M4 1h10v6c0 3-2 5-5 5s-5-2-5-5z M4 2H1c0 3 1 5 3 6M14 2h3c0 3-1 5-3 6M9 12v3M5 17.500h8v-2H5z"/><rect class="gr" x="5" y="2" width="8" height="4"/></svg>
      <!-- row 7 -->
      <svg viewBox="0 0 18 18"><path class="gr2" d="M1 18V0h11l5 5v13z"/><path class="k" d="M1 18V0h11l5 5v13z"/><rect class="dkf" x="4" y="12" width="2" height="3"/><rect class="dkf" x="7" y="10" width="2" height="5"/><rect class="dkf" x="10" y="8" width="2" height="7"/><rect class="dkf" x="13" y="11" width="2" height="4"/></svg>
      <svg viewBox="0 0 18 18"><rect class="wk" x=".5" y="4" width="17" height="12"/><text class="t123" x="10" y="14">123</text><path class="yl" d="M3 0h5L5 4h3l-6 6 1-4H1z"/></svg>
      <svg viewBox="0 0 18 18"><path class="k" d="M10 1h7v6h-7zM1 11h7v6H1z"/><path class="k" d="M10 10h8l-3 3v5l-2-1v-4z"/><path class="yl" d="M3 0h5L5 4h3l-6 6 1-4H1z"/></svg>
      <svg viewBox="0 0 18 18"><path class="lb" d="M4 3h13v8h-5l-1 5H1V6h3z"/><path class="bs" d="M4 3h13v14H1V6"/><circle class="orf" cx="3.500" cy="4" r="3.500"/><circle class="orf" cx="14" cy="13" r="2"/><rect class="orf" x="16" y="15" width="2" height="2"/></svg>
      <svg viewBox="0 0 18 18"><path class="pu" d="M9 1l4 4-4 4-4-4zM9 9l4 4-4 4-4-4zM1 9l4-4 4 4-4 4zM9 9l4-4 4 4-4 4z"/></svg>
      <svg viewBox="0 0 18 18"><path class="bs" d="M1 3h9l7 6-7 6H1l6-6zM5 3l6 6M5 15l6-6"/></svg>
    </div>
    <div class="viz-dots">···</div>
    <div class="viz-rule2"></div>
    <div class="f-label">Valores</div>
    <div class="drop d1">Agregar campos de datos a...</div>
    <div class="f-head">Obtener detalles</div>
    <div class="tg-row r1"><span>Entre varios informes</span><span class="tg"><i></i></span></div>
    <div class="tg-row r2"><span>Mantener todos los filtros</span><span class="tg on"><svg width="10" height="8" viewBox="0 0 10 8"><path d="M1 4l3 3 5-6" fill="none" stroke="#fff" stroke-width="1.800"/></svg><i></i></span></div>
    <div class="drop d2">Agregue los campos de ob...</div>
  </aside>

  <aside class="data">
    <div class="p-head"><span>Datos</span><svg width="14" height="14"><use href="#dbr"/></svg></div>
    <div class="search">
      <svg width="15" height="15" viewBox="0 0 15 15"><circle cx="6" cy="6" r="5" fill="none" stroke="#605e5c"/><path d="M9.500 9.500L14 14" stroke="#605e5c"/></svg>
      <span>Buscar</span>
    </div>
    <ul class="tree">
      <li><svg width="8" height="12" viewBox="0 0 8 12"><path d="M1 1l6 5-6 5" fill="none" stroke="#8a8886"/></svg><svg width="14" height="14"><use href="#tbl"/></svg><span>titanic_dataset_1</span></li>
      <li><svg width="8" height="12" viewBox="0 0 8 12"><path d="M1 1l6 5-6 5" fill="none" stroke="#8a8886"/></svg><svg width="14" height="14"><use href="#tbl"/></svg><span>titanic_dataset_2</span></li>
      <li><svg width="8" height="12" viewBox="0 0 8 12"><path d="M1 1l6 5-6 5" fill="none" stroke="#8a8886"/></svg><svg width="14" height="14"><use href="#tbl"/></svg><span>titanic_dataset_3</span></li>
    </ul>
  </aside>
</main>

<footer class="status">
  <span class="st-page">Página 2 de 3</span>
  <div class="zoom">
    <span class="z-btn">-</span>
    <span class="z-track"><i class="z-thumb"></i><i class="z-tick"></i></span>
    <span class="z-btn plus">+</span>
    <span class="z-pct">71 %</span>
    <svg width="16" height="16" viewBox="0 0 16 16"><rect x=".5" y=".5" width="15" height="15" fill="none" stroke="#8a8886"/><path d="M3 6V3h3M10 3h3v3M13 10v3h-3M6 13H3v-3" fill="none" stroke="#3b3a39"/></svg>
  </div>
</footer>

<div class="taskbar">
  <span class="start"><svg width="17" height="17" viewBox="0 0 17 17"><path d="M0 0h8v8H0zM9 0h8v8H9zM0 9h8v8H0zM9 9h8v8H9z" fill="#111"/></svg></span>
  <div class="t-search">
    <svg width="18" height="18" viewBox="0 0 18 18"><circle cx="11" cy="7" r="5.500" fill="none" stroke="#222" stroke-width="1.200"/><path d="M7 11.500L1 17" stroke="#222" stroke-width="1.400"/></svg>
    <span>Buscar</span>
    <svg class="sparkle" width="62" height="28" viewBox="0 0 62 28"><path d="M24 1c1 7 3 10 9 11-6 1-8 4-9 11-1-7-3-10-9-11 6-1 8-4 9-11z" fill="#f8bf1c"/><path d="M44 8c.5 3 2 5 5 5.500-3 .5-4.500 2-5 5.500-.5-3-2-5-5-5.500 3-.5 4.500-2 5-5.500z" fill="#f8bf1c"/><path d="M5 17c.5 2 1.500 3 4 3.500-2.500.5-3.500 1.500-4 4-.5-2.500-1.500-3.500-4-4 2.500-.5 3.500-1.500 4-3.500z" fill="#2aa0e8"/><circle cx="41" cy="3" r="2" fill="#e8532a"/><circle cx="59" cy="22" r="2" fill="#8cc63f"/></svg>
  </div>
  <div class="t-apps">
    <span class="app"><svg width="20" height="18" viewBox="0 0 20 18"><path d="M2 0h11M2 17h11M2 3.500h11v10H2z" fill="none" stroke="#111" stroke-width="1.200"/><path d="M17 0v3M17 6v11" stroke="#111" stroke-width="2"/></svg></span>
    <span class="app"><svg width="26" height="26" viewBox="0 0 32 32"><use href="#copilot"/></svg></span>
    <span class="app"><svg width="24" height="22" viewBox="0 0 24 22"><rect width="24" height="22" fill="#7fb2dd"/><rect x="2" y="3" width="20" height="16" fill="#cfe4f5"/><circle cx="8" cy="10" r="4" fill="#f0a830"/><path d="M8 10V6a4 4 0 0 1 4 4z" fill="#2a72b8"/><path d="M14 6h6M14 9h6M14 12h6M5 16h15" stroke="#2a72b8" stroke-width="1.500"/></svg></span>
    <span class="app"><svg width="24" height="24" viewBox="0 0 24 24"><circle cx="12" cy="12" r="12" fill="#1ed760"/><g fill="none" stroke="#111" stroke-linecap="round"><path d="M5 8.500c5-1.500 10-1 14 1.500" stroke-width="2.200"/><path d="M6 12.500c4-1 9-.7 12 1.200" stroke-width="1.900"/><path d="M7 16c3.500-.8 7-.5 10 1" stroke-width="1.500"/></g></svg></span>
    <span class="app"><svg width="26" height="24" viewBox="0 0 26 24"><rect x="8" width="18" height="24" rx="1" fill="#21a366"/><rect x="8" y="8" width="18" height="8" fill="#107c41"/><rect x="8" y="16" width="18" height="8" fill="#185c37"/><rect x="17" width="9" height="8" fill="#33c481"/><rect y="5" width="14" height="14" rx="1" fill="#107c41"/><text class="xl" x="7" y="16.500">X</text></svg></span>
    <span class="app"><svg width="26" height="24" viewBox="0 0 26 24"><rect x="8" width="18" height="24" rx="1" fill="#2b7cd3"/><rect x="8" width="18" height="8" fill="#41a5ee"/><rect x="8" y="16" width="18" height="8" fill="#185abd"/><rect y="5" width="14" height="14" rx="1" fill="#185abd"/><text class="xl" x="7" y="16.500">W</text></svg></span>
    <span class="app ul"><svg width="24" height="24" viewBox="0 0 24 24"><path d="M2 3h8l2 3H2z" fill="#e0a020"/><rect x="2" y="6" width="20" height="16" fill="#fbd469"/><rect x="7" y="14" width="10" height="8" fill="#2b88d8"/><rect x="10" y="18" width="4" height="4" fill="#fbd469"/></svg></span>
    <span class="app"><span class="chrome"></span></span>
    <span class="app"><svg width="22" height="22" viewBox="0 0 22 22"><circle cx="11" cy="11" r="8.500" fill="none" stroke="#3b3a39" stroke-width="4.500" stroke-dasharray="4 2.700"/><circle cx="11" cy="11" r="6" fill="none" stroke="#3b3a39" stroke-width="3"/></svg></span>
    <span class="app ul"><span class="chrome"></span></span>
    <span class="app ul"><svg width="24" height="26" viewBox="0 0 24 26"><path d="M6 2l16 2-3 20-17-3z" fill="#a9d6e8" stroke="#7f9eaa"/><path d="M6 2l16 2-.5 3L5.500 5z" fill="#5ea6cd"/><path d="M19 24l3-20 1 1-3 20z" fill="#c0a070"/></svg></span>
    <span class="app active"><span class="pbi"><svg width="18" height="26" viewBox="0 0 18 26"><rect x="11" y="1" width="6" height="24" fill="#f2c811"/><rect x="6" y="8" width="6" height="17" fill="#e0ac10"/><rect x="1" y="14" width="6" height="11" fill="#f6d860"/></svg></span></span>
    <span class="app ul"><svg width="26" height="28" viewBox="0 0 26 28"><ellipse cx="12" cy="16" rx="11" ry="10" fill="#dfe7ee" stroke="#9aa8b4"/><circle cx="7" cy="12" r="2.200" fill="#e8a030"/><circle cx="12" cy="9" r="2.200" fill="#50a850"/><circle cx="6" cy="18" r="2.200" fill="#d84040"/><circle cx="17" cy="10" r="2" fill="#3a80d0"/><path d="M13 26L24 2" stroke="#c48a40" stroke-width="2"/></svg></span>
  </div>
  <div class="tray">
    <svg class="t1" width="14" height="8" viewBox="0 0 14 8"><path d="M1 7l6-6 6 6" fill="none" stroke="#111" stroke-width="1.200"/></svg>
    <svg class="t2" width="16" height="18" viewBox="0 0 16 18"><g fill="none" stroke="#333"><path d="M1 16C1 8 6 2 14 1M4 16c0-5 4-10 10-11M7 16c0-3 3-7 7-7"/></g><circle cx="13" cy="15" r="2" fill="#111"/></svg>
    <svg class="t3" width="18" height="22" viewBox="0 0 18 22"><rect x=".5" y=".5" width="15" height="18" fill="none" stroke="#222"/><path d="M4 6c4-2 7 0 8 3M12 12c-3 2-6 1-8-2" fill="none" stroke="#222"/><rect x="10" y="13" width="7" height="8" rx="1" fill="#f08a1c"/></svg>
    <svg class="t4" width="16" height="12" viewBox="0 0 16 12"><rect x=".5" y="1" width="13" height="10" fill="none" stroke="#111"/><rect x="2" y="3" width="6" height="6" fill="#111"/><rect x="14" y="4" width="2" height="4" fill="#111"/></svg>
    <svg class="t5" width="18" height="18" viewBox="0 0 18 18"><path d="M1 6h3l4-4v14l-4-4H1z" fill="none" stroke="#222"/><path d="M11 6c1 2 1 4 0 6M13 4c2 3 2 7 0 10M15 2c3 4 3 10 0 14" fill="none" stroke="#222"/></svg>
    <svg class="t6" width="18" height="20" viewBox="0 0 18 20"><path d="M1 19c3-2 4-6 5-9 1-3 3-8 6-8 2 1 0 6-2 9-2 3-4 5-4 7 2 0 3-4 6-4 1 0 0 3 2 3" fill="none" stroke="#222"/></svg>
    <span class="lang">ESP</span>
    <span class="clock">10:25<br>16/11/2024</span>
    <svg class="t7" width="18" height="20" viewBox="0 0 18 20"><path d="M1 1h16v12H9l-3 4v-4H1z" fill="#111"/><path d="M4 4h10M4 7h10M4 10h7" stroke="#ddd"/></svg>
  </div>
</div>
</body>
</html>
```

FILE: styles.css
```css
* { box-sizing: border-box; }
html, body { margin: 0; padding: 0; }
body {
  width: 1366px; height: 768px; overflow: hidden;
  font-family: Roboto, "Open Sans", sans-serif;
  color: #252423; background: #f3f2f1;
  display: flex; flex-direction: column;
}
.defs { position: absolute; }
svg { display: block; flex: none; }

/* Title bar */
.titlebar {
  height: 34px; background: #3c3b39; color: #fff;
  display: flex; align-items: center; font-size: 12px; padding-left: 17px;
}
.tb-ic { margin-right: 14px; }
.redo { margin-right: 9px; }
.doc-title { white-space: nowrap; width: 392px; }
.caret { border: 5px solid transparent; border-top: 6px solid #fff; border-bottom: 0; margin: -3px 0 0 0; }
.signin { margin-left: auto; font-size: 12px; }
.avatar { margin-left: 10px; }
.winbtns { display: flex; gap: 32px; margin: 0 16px 0 31px; }

/* Tabs row */
.tabsrow {
  height: 34px; background: #fbfbfb; display: flex; align-items: flex-start;
  font-size: 13.7px; padding-left: 23px; gap: 32.5px; position: relative;
}
.rtab { height: 30px; line-height: 33px; white-space: nowrap; }
.rtab.first { margin-right: 6px; }
.rtab.active { border-bottom: 2px solid #117865; font-weight: 500; }
.share {
  margin: 4px 6px 0 auto; width: 107px; height: 24px; border: 0; border-radius: 4px;
  background: #117865; color: #fff; font: 12.5px Roboto, sans-serif;
  display: flex; align-items: center; padding: 0 6px 0 7px; gap: 7px;
}
.share-cv { margin-left: auto; color: #fff; }

/* Ribbon */
.ribbon {
  height: 92px; background: #fbfbfb; display: flex; position: relative;
  font-size: 12px; color: #3b3a39;
}
.group { display: flex; flex-direction: column; border-right: 1px solid #d2d0ce; height: 88px; margin-top: 2px; }
.group-body { display: flex; flex: none; height: 77px; padding-top: 6px; }
.glabel { flex: none; font-size: 10px; text-align: center; line-height: 12px; color: #444; white-space: nowrap; }
.g-clip { width: 81px; }
.g-datos { width: 433px; } .g-datos .group-body { padding-left: 8px; }
.g-cons { width: 140px; } .g-cons .group-body { padding-left: 10px; }
.g-ins { width: 221px; } .g-ins .group-body { padding-left: 10px; }
.g-calc { width: 184px; } .g-calc .group-body { padding-left: 10px; }
.g-conf { width: 110px; } .g-conf .group-body { padding-left: 6px; }
.g-pub { width: 63px; } .g-pub .group-body { padding-left: 5px; }
.g-cop { width: 60px; } .g-cop .group-body { padding-left: 4px; }
.item { display: flex; flex-direction: column; align-items: center; text-align: center; flex: none; }
.ic { height: 34px; }
.lbl { margin-top: -1px; line-height: 16px; white-space: nowrap; }
.off { color: #c0bebc; }
.cv { display: inline-block; margin-left: 2px; vertical-align: -1px; color: #3b3a39; }
.off .cv { color: #b0aeac; }
.cv.solo { margin: 4px 0 0; }
.w-pegar { width: 40px; margin-left: 8px; }
.w42 { width: 42px; } .w46 { width: 46px; } .w48 { width: 48px; } .w50 { width: 50px; }
.w52 { width: 52px; } .w54 { width: 54px; } .w58 { width: 58px; } .w64 { width: 64px; }
.w72 { width: 72px; } .w76 { width: 76px; } .w96 { width: 96px; } .w104 { width: 104px; }
.mini { display: flex; flex-direction: column; gap: 7px; align-items: center; margin-left: 2px; }
.collapse { position: absolute; right: 6px; bottom: 4px; }
.xl { font: 700 11px Roboto, sans-serif; fill: #fff; text-anchor: middle; }
.atxt { font: 20px Roboto, sans-serif; fill: #1e88d2; text-anchor: middle; }
.fx { font: italic 15px "Liberation Serif", serif; fill: #b0aeac; }

/* Main */
.main { height: 543px; display: flex; }
.rail { width: 42px; background: #f3f2f1; border-right: 1px solid #e1dfdd; display: flex; flex-direction: column; position: relative; }
.rail-btn { height: 40px; display: flex; align-items: center; justify-content: center; }
.rail-btn.on { box-shadow: inset 3px 0 0 #117865; }
.dax { font: 700 6.5px Roboto, sans-serif; fill: #777; text-anchor: middle; }

.center { width: 929px; display: flex; flex-direction: column; }
.canvas { height: 508px; background: linear-gradient(90deg,#ececec,#f8f8f8 8px); padding-left: 12px; background-color: #eee; }
.page { width: 904px; height: 508px; background: #fff; position: relative; }

.rep-head { height: 67px; background: #595959; display: flex; justify-content: space-between; padding: 0 12px 0 14px; box-shadow: 0 1px 1px #aaa; }
.rep-title { margin: 20px 0 0; font: 500 27px Roboto, sans-serif; letter-spacing: .66px; color: #ececec; white-space: nowrap; }
.slicers { display: flex; gap: 14px; }
.slicer { width: 156px; }
.sl-label { height: 27px; display: flex; justify-content: space-between; align-items: center; padding: 2px 2px 3px 2px; font-weight: 700; font-size: 12px; color: #d8d8d8; }
.sl-faint { color: #777; margin-right: 2px; }
.sl-box { height: 25px; border: 1px solid #e6e6e6; display: flex; align-items: center; justify-content: space-between; padding: 0 3px 0 4px; color: #eee; font-size: 14.5px; letter-spacing: .4px; }

.visuals { display: flex; gap: 19px; padding: 24px 0 0 12px; }
.card { width: 428px; height: 389px; background: #eee; border: 1px solid #777; border-radius: 52px; box-shadow: 5px 6px 5px #8a8a8a; position: relative; }
.map-card { width: 427px; padding: 17px 0 0 36px; }
.legend { display: flex; align-items: center; white-space: nowrap; }
.map-legend { height: 16px; font-size: 9.3px; color: #777; gap: 2px; }
.map-legend b { margin-right: 4px; color: #666; }
.map-legend span:not(.dot) { margin-right: 3px; }
.dot { width: 7px; height: 7px; border-radius: 50%; flex: none; }
.dot.big { width: 9px; height: 9px; }
.navy { background: #344a5a; } .pink { background: #c47ca5; } .plum { background: #5f3163; }
.land { fill: #f6f4f2; stroke: #f6f4f2; stroke-width: 4; stroke-linejoin: round; }
.roads { fill: none; stroke: #d6bfe8; stroke-width: 4; }
.map-pts { fill: #555; }
.mt text { font: 11px Roboto, sans-serif; font-size: 33px; fill: #666; paint-order: stroke; stroke: #fff; stroke-width: 3px; stroke-opacity: .7; }
.mt .mt-big { font-size: 37px; }
.mt .mt-cty { font-size: 30px; letter-spacing: 2px; fill: #777; }
.mt .mt-sm { font-size: 21px; letter-spacing: 1px; fill: #777; }
.mt .mt-sea { font: italic 500 22px Roboto, sans-serif; letter-spacing: 1.500px; fill: #3a5fb0; stroke: none; }
.mt .mt-cr { font-size: 16px; fill: #666; stroke: none; }
.mt .mt-term { font-size: 15px; fill: #4a6fc0; stroke: none; text-decoration: underline; }
.vis-head { position: absolute; left: 312px; top: -12px; width: 82px; height: 21px; background: #fff; display: flex; align-items: center; padding-left: 3px; gap: 6px; }
.vis-head i { width: 3px; height: 1px; background: #999; }
.more { font-size: 15px; font-weight: 700; letter-spacing: 1px; color: #666; line-height: 12px; }

.table-card { padding: 12px 0 0 26px; background: #eee; }
.tbl { width: 370px; height: 362px; overflow: hidden; font-size: 9.2px; color: #444; }
.thead, .row { display: grid; grid-template-columns: 215px 59px 96px; }
.thead { height: 19px; align-items: center; background: #e4e4e4; border-bottom: 1px solid #8c6c90; }
.thead span, .row span { padding-left: 4px; white-space: nowrap; }
.row { height: 13.450px; background: #e6e6e6; line-height: 14.500px; }
.row.d { background: #cdcdcd; }
.row.tall { height: 25px; line-height: 11.500px; padding-top: 2px; }
.row.tall span:first-child { white-space: normal; }
.scroll { position: absolute; left: 408px; top: 12px; width: 5px; height: 361px; background: #e6e6e6; border-radius: 3px; }
.scroll::before { content: ""; display: block; height: 17px; background: #8a8a8a; border-radius: 3px; }

.tooltip {
  position: absolute; left: 358px; top: 115px; width: 452px; height: 251px;
  background: #fff; border: 1px solid #333; display: flex; gap: 9px; padding: 8px 0 0 15px; z-index: 3;
}
.tip-col { width: 241px; display: flex; flex-direction: column; gap: 13px; }
.tip-card { height: 104px; background: #fff; border: 1px solid #222; border-radius: 4px; box-shadow: 6px 7px 7px #b5b5b5; }
.tip-card.second { height: 106px; }
.pie-legend { height: 26px; margin-top: 8px; justify-content: center; font-size: 10px; color: #777; gap: 2px; }
.pie-legend span:not(.dot) { margin-right: 4px; }
.pie-legend .cl { margin-right: 7px; color: #666; font-size: 10px; }
.pie { margin-top: -2px; }
.pct { font: 700 10px Roboto, sans-serif; fill: #666; }
.kpi { width: 167px; height: 150px; margin-top: 42px; background: #fff; border: 1px solid #222; border-radius: 12px; box-shadow: 6px 7px 7px #b5b5b5; padding: 5px 9px; }
.kpi-title { font-size: 20px; line-height: 25px; letter-spacing: .6px; color: #252423; font-weight: 400; }
.kpi-val { font-size: 49px; line-height: 60px; margin-top: 19px; margin-left: 33px; letter-spacing: 1.600px; color: #252423; }

/* Page tabs */
.pagetabs { height: 35px; display: flex; background: #f3f2f1; font-size: 11.7px; }
.devices { width: 126px; display: flex; align-items: center; border-right: 1px solid #d2d0ce; }
.dev { flex: none; width: 24px; height: 35px; display: flex; align-items: center; justify-content: center; margin-right: 20px; position: relative; }
.dev:first-child { margin-left: 9px; }
.dev + .dev { margin-right: 15px; }
.dev.on::after { content: ""; position: absolute; left: 0; right: 0; bottom: 3px; height: 3px; background: #117865; border-radius: 2px; }
.pg-arrow { margin-right: 16px; }
.ptab { background: #fff; height: 35px; display: flex; align-items: center; justify-content: center; position: relative; border-right: 1px solid #e1dfdd; white-space: nowrap; }
.ptab.w1 { width: 169.500px; }
.ptab.w2 { width: 77px; font-weight: 500; }
.ptab.w3 { width: 78px; gap: 3px; }
.ptab.on { box-shadow: inset 0 -4px 0 #117865; }
.ptab em { position: absolute; right: 4px; top: 2px; font-style: normal; font-size: 11px; }
.ptab-add { width: 39px; background: #117865; color: #fff; text-align: center; font-size: 22px; font-weight: 700; line-height: 33px; }

/* Filters */
.filters { width: 34px; background: #f3f2f1; border-left: 1px solid #a19f9d; border-right: 1px solid #d2d0ce; display: flex; flex-direction: column; align-items: center; padding-top: 12px; }
.fi-ic { margin-top: 14px; }
.fi-txt { writing-mode: vertical-rl; font-size: 14.5px; font-weight: 700; margin-top: 6px; letter-spacing: .4px; }

/* Viz */
.viz { width: 180px; background: #f3f2f1; border-right: 1px solid #e1dfdd; display: flex; flex-direction: column; }
.p-head { display: flex; justify-content: space-between; align-items: center; height: 38px; font-size: 15px; font-weight: 500; padding: 2px 8px 0 8px; color: #252423; letter-spacing: .1px; }
.viz-sub { font-size: 12px; padding-left: 8px; font-weight: 500; line-height: 16px; }
.viz-mode { display: flex; align-items: center; padding: 3px 0 0 8px; height: 37px; }
.vm { width: 32px; height: 32px; background: #c8c8c8; border-radius: 2px; display: flex; align-items: center; justify-content: center; }
.vm2 { margin-left: 36px; }
.viz-rule { height: 1px; background: #a19f9d; margin-top: 8px; position: relative; }
.viz-rule::before { content: ""; position: absolute; left: 18px; top: -4px; width: 9px; height: 9px; background: #f3f2f1; border-left: 1px solid #a19f9d; border-top: 1px solid #a19f9d; transform: rotate(45deg) ; }
.viz-grid { display: grid; grid-template-columns: repeat(6, 18px); grid-auto-rows: 18px; column-gap: 10px; row-gap: 10px; padding: 12px 0 0 11px; }
.viz-grid svg { overflow: hidden; }
.viz-dots { padding-left: 12px; font-size: 16px; font-weight: 700; letter-spacing: 1.500px; line-height: 16px; color: #555; margin-top: 12px; height: 14px; }
.viz-rule2 { height: 1px; background: #d8d6d4; margin-top: 12px; }
.f-label { font-size: 12px; padding-left: 12px; margin-top: 9px; line-height: 16px; }
.drop { height: 28px; background: #fff; border: 1px dashed #bdbbb9; margin: 5px 6px 0 4px; font-size: 12px; display: flex; align-items: center; white-space: nowrap; overflow: hidden; letter-spacing: .1px; }
.d1 { padding-left: 10px; }
.d2 { padding-left: 8px; height: 26px; margin-top: 8px; }
.f-head { font-size: 12px; font-weight: 500; padding-left: 12px; margin-top: 12px; line-height: 16px; color: #3b3a39; }
.tg-row { display: flex; font-size: 12px; padding-left: 12px; line-height: 16px; color: #3b3a39; position: relative; }
.r1 { margin-top: 8px; }
.r2 { margin-top: 11px; }
.r2 > span:first-child { width: 112px; }
.tg { width: 32px; height: 16px; border-radius: 8px; border: 1px solid #8a8886; background: #fff; position: absolute; left: 126px; top: 0; display: flex; align-items: center; padding-left: 3px; }
.tg i { width: 8px; height: 8px; border-radius: 50%; background: #555; display: block; }
.tg.on { background: #117865; border-color: #117865; justify-content: space-between; padding: 0 3px 0 4px; }
.tg.on i { background: #fff; width: 9px; height: 9px; }

/* icon pieces */
.k { fill: none; stroke: #3b3a39; }
.k2 { fill: none; stroke: #3b3a39; stroke-width: .8; }
.bl { fill: #3a96dd; stroke: #0f6cbd; stroke-width: .6; }
.lb { fill: #7ab7e8; stroke: #0f6cbd; stroke-width: .8; }
.bd { fill: #2f86c9; }
.gr { fill: #b3b1af; stroke: none; }
.gr2 { fill: #c8c6c4; }
.wk { fill: #fff; stroke: #3b3a39; }
.bs { fill: none; stroke: #0f6cbd; stroke-width: 1; }
.bs2 { fill: none; stroke: #0f6cbd; stroke-width: 1.600; }
.or { fill: #f08a1c; }
.orf { fill: #d86c16; }
.dk rect, .dkf { fill: #3b3a39; }
.lbf, .lbf rect { fill: #7ab7e8; }
.gnf { fill: #2f9e5b; }
.rdf { fill: #d83b3b; }
.ring { fill: none; stroke: #7ab7e8; stroke-width: 4.500; }
.ring2 { fill: none; stroke: #0f6cbd; stroke-width: 4.500; }
.yl { fill: #f8b53a; stroke: #d86c16; stroke-width: .7; }
.pu { fill: none; stroke: #a0409a; stroke-width: 1.100; }
.t123 { font: 8px Roboto, sans-serif; fill: #1e88d2; text-anchor: middle; }
.tR { font: 700 16px Roboto, sans-serif; fill: #2f7fc1; text-anchor: middle; }
.tPy { font: 700 15px Roboto, sans-serif; fill: #2f7fc1; text-anchor: middle; }

/* Data */
.data { flex: 1; background: #f3f2f1; display: flex; flex-direction: column; }
.data .p-head { padding-left: 9px; }
.search { height: 24px; margin: 7px 4px 0 6px; background: #fff; border: 1px solid #d2d0ce; border-bottom-color: #8a8886; border-radius: 3px; display: flex; align-items: center; padding-left: 12px; gap: 5px; color: #605e5c; font-size: 13px; }
.tree { list-style: none; margin: 9px 0 0; padding: 0 0 0 16px; font-size: 11.5px; color: #3b3a39; }
.tree li { height: 24px; display: flex; align-items: center; gap: 5px; }
.tree li span { letter-spacing: .1px; }

/* Status */
.status { height: 25px; background: #f3f2f1; border-top: 1px solid #e1dfdd; border-bottom: 1px solid #fff; display: flex; align-items: center; justify-content: space-between; font-size: 11.500px; padding-left: 4px; color: #444; position: relative; }
.status::before { content: ""; position: absolute; left: 0; bottom: -1px; width: 100px; height: 1px; background: #222; }
.status::after { content: ""; position: absolute; right: 0; bottom: -1px; width: 100px; height: 1px; background: #222; }
.zoom { display: flex; align-items: center; padding-right: 18px; }
.z-btn { width: 8px; text-align: center; font-size: 14px; color: #444; }
.z-btn.plus { margin-left: 5px; }
.z-track { width: 100px; height: 1px; background: #666; margin-left: 3px; position: relative; }
.z-thumb { position: absolute; left: 33px; top: -5px; width: 3px; height: 11px; background: #555; }
.z-tick { position: absolute; left: 50px; top: -3px; width: 1px; height: 7px; background: #555; }
.z-pct { margin: 0 16px 0 17px; color: #666; white-space: nowrap; }

/* Taskbar */
.taskbar { flex: 1; background: linear-gradient(90deg,#d3d9e1,#d7deea 55%,#d5dbd8); display: flex; align-items: stretch; }
.start { width: 48px; display: flex; align-items: center; justify-content: center; }
.t-search { width: 287px; background: #fff; display: flex; align-items: center; padding-left: 12px; font-size: 14.500px; color: #333; position: relative; }
.t-search span { margin-left: 10px; }
.sparkle { position: absolute; right: 8px; top: 7px; }
.t-apps { display: flex; margin-left: 1.400px; }
.app { width: 49.200px; display: flex; align-items: center; justify-content: center; position: relative; }
.app.ul::after { content: ""; position: absolute; left: 5px; right: 5px; bottom: 0; height: 3px; background: #0078d4; }
.app.active { background: #eef1f7; }
.app.active::after { content: ""; position: absolute; left: 0; right: 0; bottom: 0; height: 3px; background: #0078d4; }
.pbi { width: 24px; height: 32px; background: #0078d4; display: flex; align-items: center; justify-content: center; }
.chrome { width: 24px; height: 26px; border-radius: 50%; background: conic-gradient(from -30deg,#ea4335 0 120deg,#fbbc05 120deg 210deg,#34a853 210deg 330deg,#ea4335 330deg); display: flex; align-items: center; justify-content: center; }
.chrome::after { content: ""; width: 12px; height: 13px; border-radius: 50%; background: #4285f4; border: 2px solid #fff; }
.tray { flex: 1; position: relative; font-size: 11.500px; color: #222; }
.tray svg, .lang, .clock { position: absolute; }
.t1 { left: 46px; top: 17px; }
.t2 { left: 79px; top: 12px; }
.t3 { left: 108px; top: 10px; }
.t4 { left: 141px; top: 15px; }
.t5 { left: 172px; top: 12px; }
.t6 { left: 206px; top: 11px; }
.lang { left: 245px; top: 13px; }
.clock { left: 275px; top: 2px; width: 60px; text-align: center; line-height: 18.500px; }
.t7 { left: 348px; top: 10px; }
```
